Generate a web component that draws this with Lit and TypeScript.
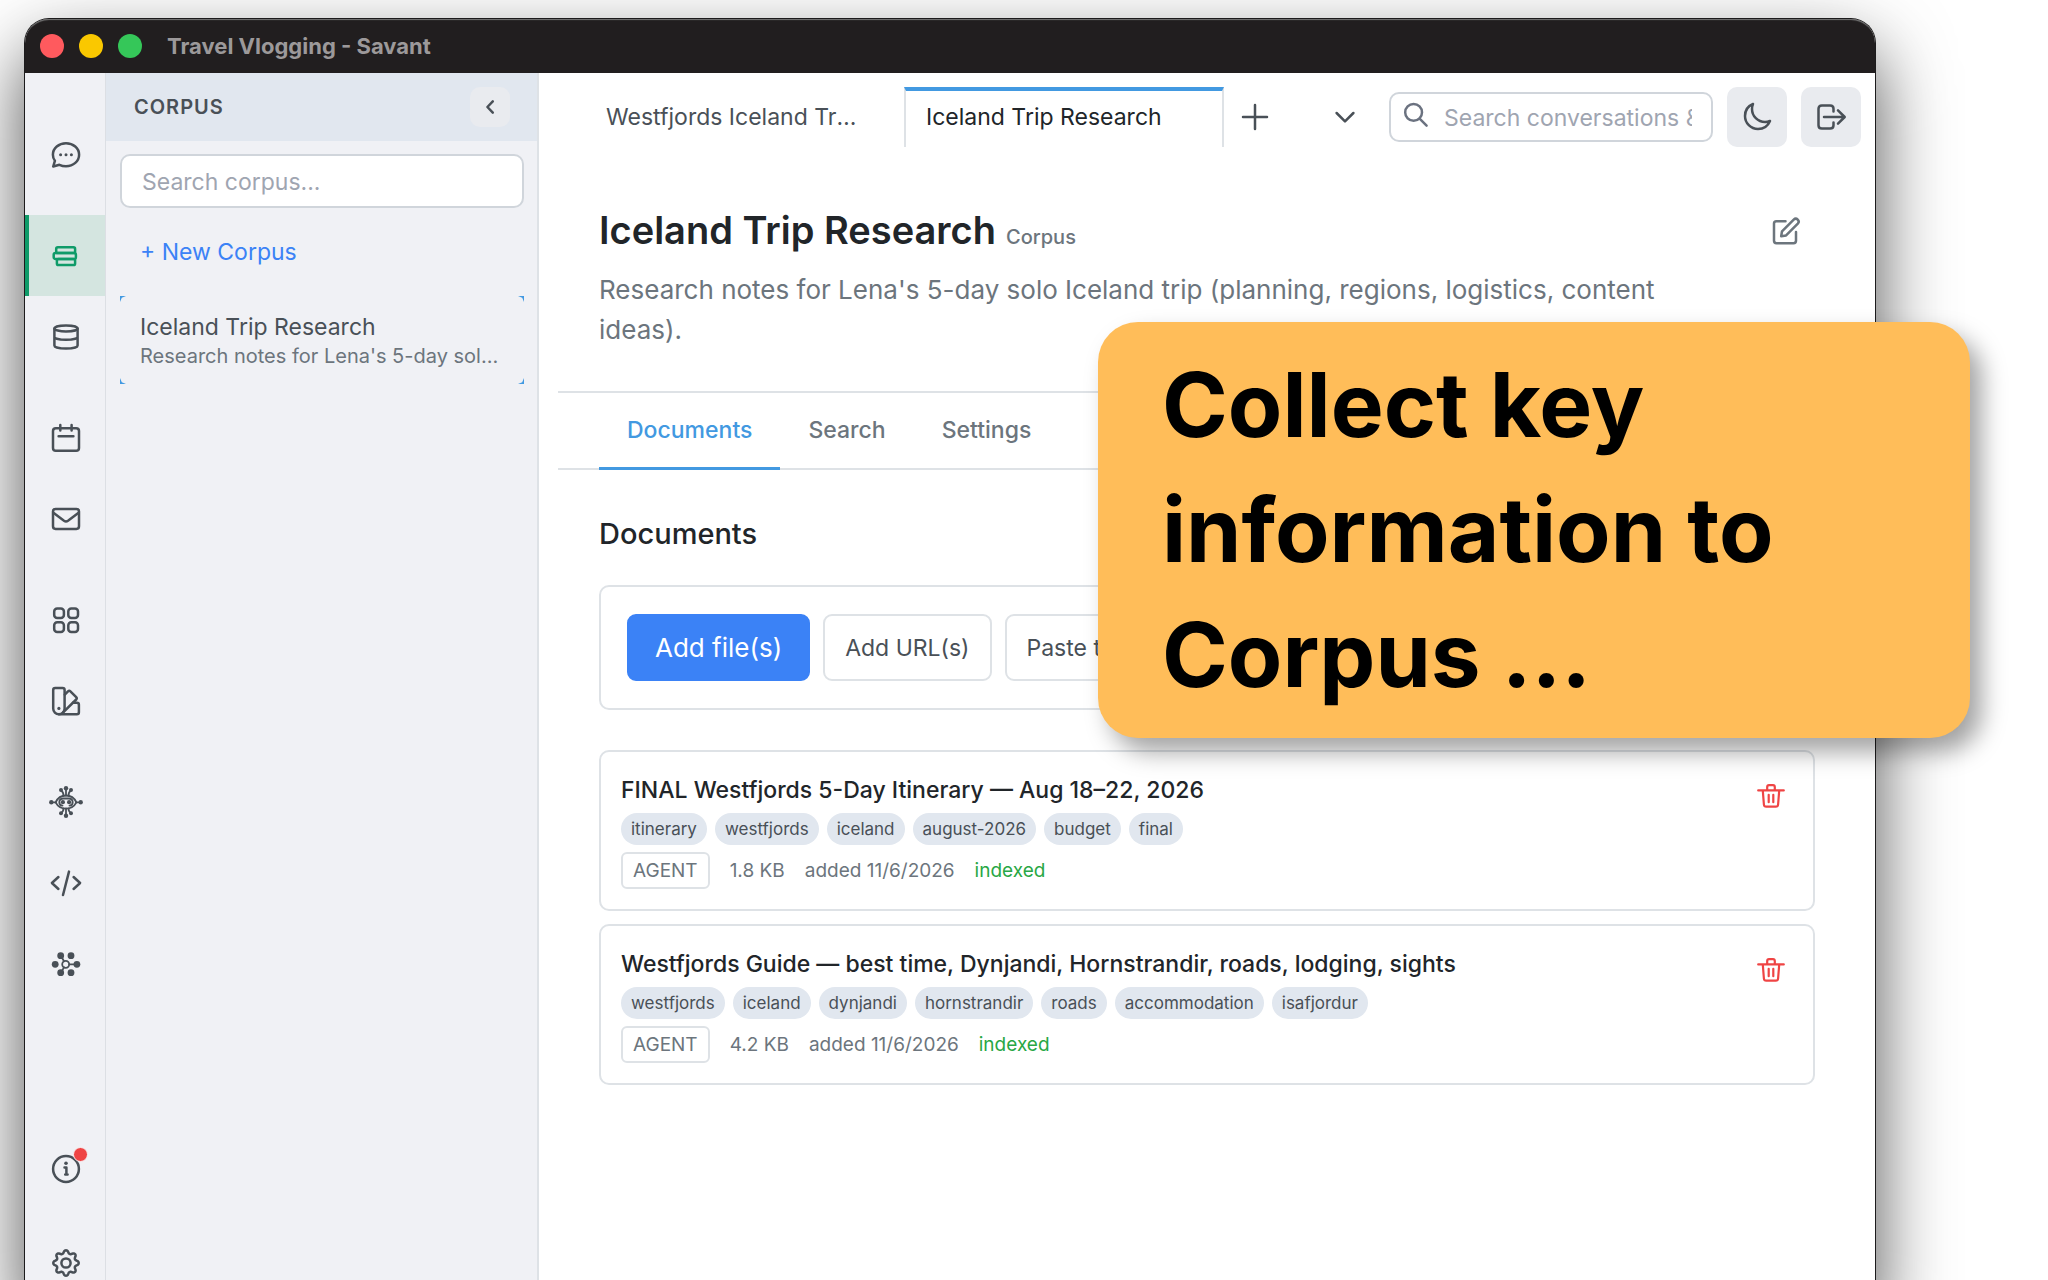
import { LitElement, html, svg, css, type SVGTemplateResult } from "lit";
import { customElement, property } from "lit/decorators.js";

/* Outline of an eight-toothed cog, traced as a wavy circle around (16, 16). */
const cogOutline = (): string => {
  const points: string[] = [];
  for (let step = 0; step < 128; step++) {
    const angle = (step / 128) * Math.PI * 2;
    const wave = Math.cos(angle * 8);
    const radius = 11.2 + 1.5 * Math.sign(wave) * Math.pow(Math.abs(wave), 0.7);
    points.push(
      `${(16 + radius * Math.sin(angle)).toFixed(2)} ${(16 - radius * Math.cos(angle)).toFixed(2)}`,
    );
  }
  return `M${points.join("L")}Z`;
};

const icons: Record<string, SVGTemplateResult> = {
  chat: svg`
    <path d="M4.900 21.800C3.500 20 2.900 17.900 2.900 15.700 2.900 9.200 8.800 4.300 16 4.300S29.100 9.200 29.100 15.700 23.300 27.200 16 27.200c-2.400 0-4.600-.5-6.600-1.400L3.200 27.500Z" />
    <g class="solid"><circle cx="10.600" cy="15.800" r="1.500" /><circle cx="16" cy="15.800" r="1.500" /><circle cx="21.400" cy="15.800" r="1.500" /></g>`,
  corpus: svg`
    <rect x="6.200" y="7.300" width="18.900" height="5.700" rx="1.600" />
    <rect x="3.700" y="13" width="22.200" height="6" rx="1.800" />
    <rect x="6.900" y="19" width="18.200" height="6" rx="1.600" />`,
  database: svg`
    <ellipse cx="16" cy="7.400" rx="11.600" ry="3" />
    <path d="M4.400 7.400v17c0 1.700 5.200 3.100 11.600 3.100s11.600-1.400 11.600-3.100v-17M4.400 15.700c0 1.700 5.200 3.100 11.600 3.100s11.600-1.400 11.600-3.100" />`,
  calendar: svg`
    <rect x="3" y="6.300" width="26" height="22.500" rx="2.800" />
    <path d="M10.300 2.900v5.600M21.600 2.900v5.600M8.600 14.200h14.800" />`,
  mail: svg`
    <rect x="3" y="5.900" width="26" height="20" rx="2.600" />
    <path d="M3.400 9.800 14 17.800q2 1.400 4 0L28.600 9.800" />`,
  grid: svg`
    <rect x="4.200" y="4.400" width="9.700" height="9.700" rx="3" />
    <rect x="18.300" y="4.400" width="9.700" height="9.700" rx="3" />
    <rect x="4.200" y="18.200" width="9.700" height="9.700" rx="3" />
    <rect x="18.300" y="18.200" width="9.700" height="9.700" rx="3" />`,
  swatch: svg`
    <path d="M3.200 5q0-2 2-2h7.400q2 0 2 2v18.500a5.700 5.700 0 0 1-11.400 0Z" />
    <path d="M14.800 9.600 18 6.300q1.200-1.200 2.400 0l5.800 5.800q1.200 1.200 0 2.400L12.900 27.700" />
    <path d="M23 17.800h3.900q2 0 2 2v7.400q0 2-2 2H9" />
    <circle class="solid" cx="8.900" cy="23.400" r="1.600" />`,
  agent: svg`
    <g class="solid">
      <circle cx="16" cy="2.200" r="2.200" /><circle cx="11" cy="4" r="2" /><circle cx="21" cy="4" r="2" />
      <circle cx="1.300" cy="16.300" r="2.200" /><circle cx="30.700" cy="16.300" r="2.200" />
      <circle cx="16" cy="29.800" r="2.200" /><circle cx="11" cy="27.200" r="2" /><circle cx="21" cy="27.200" r="2" />
      <circle cx="12.900" cy="16.200" r="2.100" /><circle cx="19.100" cy="16.200" r="2.100" />
    </g>
    <path class="fine" d="M16 2.500v7M11 4.500q2.500 1.500 2.500 5M21 4.500q-2.500 1.500-2.500 5M1.500 16.300h4.500M30.500 16.300H26M16 29.500v-7M11 27q2.500-1.500 2.500-4.500M21 27q-2.500-1.500-2.500-4.500" />
    <path class="fine" d="M5.600 16.300C8 11.300 11.500 9.500 16 9.500s8 1.800 10.400 6.800C24 20.800 20.500 22.600 16 22.600S8 20.800 5.600 16.300Z" />
    <path class="fine" d="M12.500 19.600q-3.200 0-3.200-3.300 0-3.800 4-3.800h5.400q4 0 4 3.800 0 3.300-3.200 3.300" />`,
  code: svg`<path d="M8.400 10 1.900 16l6.500 6M23.600 10l6.500 6-6.500 6M19 4.600 13 28" />`,
  hub: svg`
    <g class="solid">
      <circle cx="5.200" cy="16.300" r="3.400" /><circle cx="10.700" cy="7.700" r="3.400" /><circle cx="21" cy="7.700" r="3.400" />
      <circle cx="26.900" cy="16.300" r="3.400" /><circle cx="10.700" cy="24.700" r="3.400" /><circle cx="21" cy="24.700" r="3.400" />
    </g>
    <circle class="fine" cx="15.700" cy="16.300" r="3.500" />
    <path class="fine" d="M19.200 16.300H26M14 13.200 11 8M14 19.400 11 24.500" />`,
  info: svg`
    <circle cx="16" cy="16" r="12.900" />
    <circle class="solid" cx="16" cy="10.300" r="1.800" />
    <path d="M14.500 14.600h1.900v7M15.200 21.600h2.400" />`,
  settings: svg`<circle cx="16" cy="16" r="4.600" /><path d=${cogOutline()} />`,
  back: svg`<path d="m18.800 10.400-5.400 5.600 5.400 5.600" />`,
  plus: svg`<path d="M16 4v24M4 16h24" />`,
  down: svg`<path d="m7.600 12 8.400 8.400 8.400-8.400" />`,
  search: svg`<circle cx="13.600" cy="12.400" r="8.400" /><path d="m19.600 18.600 7 7" />`,
  moon: svg`<path d="M29 20a13 13 0 0 1-5 1c-7.200 0-13-5.800-13-13 0-1.800.350-3.500 1-5A13 13 0 0 0 4 15c0 7.200 5.800 13 13 13a13 13 0 0 0 12-8Z" />`,
  leave: svg`<path d="M18.500 10.500V7.800q0-3.300-3.300-3.300H6.800q-3.300 0-3.300 3.300v16.400q0 3.300 3.300 3.300h8.400q3.300 0 3.300-3.300v-2.700M9 16h20.500M23 9.300l6.700 6.700-6.700 6.700" />`,
  edit: svg`<path d="M15.500 6.200H6.400q-2.400 0-2.400 2.400v17.200q0 2.400 2.400 2.400h17.200q2.400 0 2.400-2.400v-8.900" /><path d="m11.200 21.200.8-4.900L23.700 4.600a2.900 2.900 0 0 1 4.100 4.100L16.100 20.400Z" />`,
  trash: svg`<path d="M3.200 10.400h25.600M12.200 10.200V7q0-1.800 1.800-1.800h4q1.800 0 1.800 1.800v3.200M7.800 10.600l1.100 13.900q.2 2.200 2.400 2.200h9.400q2.200 0 2.400-2.200l1.100-13.900M13.700 14.800v7.400M18.300 14.800v7.400" />`,
};

@customElement("app-icon")
export class AppIcon extends LitElement {
  @property() name = "";

  static styles = css`
    :host {
      display: block;
      flex: none;
      width: 32px;
      height: 32px;
    }
    svg {
      display: block;
      width: 100%;
      height: 100%;
      overflow: visible;
      fill: none;
      stroke: currentColor;
      stroke-width: var(--icon-stroke, 2.5);
      stroke-linecap: round;
      stroke-linejoin: round;
    }
    .solid {
      fill: currentColor;
      stroke: none;
    }
    .fine {
      stroke-width: 1.8;
    }
  `;

  render() {
    return html`<svg viewBox="0 0 32 32" aria-hidden="true">${icons[this.name]}</svg>`;
  }
}

interface CorpusDocument {
  title: string;
  tags: string[];
  size: string;
  added: string;
}

const documents: CorpusDocument[] = [
  {
    title: "FINAL Westfjords 5-Day Itinerary — Aug 18–22, 2026",
    tags: ["itinerary", "westfjords", "iceland", "august-2026", "budget", "final"],
    size: "1.8 KB",
    added: "added 11/6/2026",
  },
  {
    title: "Westfjords Guide — best time, Dynjandi, Hornstrandir, roads, lodging, sights",
    tags: ["westfjords", "iceland", "dynjandi", "hornstrandir", "roads", "accommodation", "isafjordur"],
    size: "4.2 KB",
    added: "added 11/6/2026",
  },
];

const railGroups: { icon: string; label: string; active?: boolean }[][] = [
  [{ icon: "chat", label: "Chat" }],
  [
    { icon: "corpus", label: "Corpus", active: true },
    { icon: "database", label: "Database" },
  ],
  [
    { icon: "calendar", label: "Calendar" },
    { icon: "mail", label: "Mail" },
  ],
  [
    { icon: "grid", label: "Apps" },
    { icon: "swatch", label: "Themes" },
  ],
  [
    { icon: "agent", label: "Agents" },
    { icon: "code", label: "Code" },
    { icon: "hub", label: "Connections" },
  ],
];

@customElement("app-root")
export class AppRoot extends LitElement {
  static styles = css`
    :host {
      display: block;
      font-family: Inter, "Liberation Sans", sans-serif;
      font-size: 23px;
      color: #495057;
    }
    * {
      box-sizing: border-box;
    }
    button,
    input {
      font: inherit;
      color: inherit;
      margin: 0;
    }
    button {
      border: 0;
      padding: 0;
      background: none;
      cursor: pointer;
    }
    h1,
    h2,
    h3,
    p,
    ul {
      margin: 0;
      padding: 0;
    }
    a {
      color: inherit;
      text-decoration: none;
    }

    .stage {
      position: relative;
      height: 100vh;
      overflow: hidden;
      background: #fff;
      padding: 19px 173px 0 25px;
    }
    .window {
      display: flex;
      flex-direction: column;
      height: calc(100vh + 4px);
      border-radius: 24px 24px 0 0;
      background: #fff;
      box-shadow:
        0 0 0 1px #1c1b1c,
        0 32px 76px rgba(0, 0, 0, 0.7);
    }
    .titlebar {
      flex: none;
      display: flex;
      align-items: center;
      gap: 15px;
      height: 54px;
      padding: 0 15px;
      border-radius: 24px 24px 0 0;
      background: #211e1f;
      box-shadow: inset 0 2px 1px -1px #777;
      color: #9c999a;
    }
    .light {
      width: 24px;
      height: 24px;
      border-radius: 50%;
    }
    .red {
      background: #ff5a5e;
    }
    .yellow {
      background: #fac800;
    }
    .green {
      background: #35c759;
    }
    .window-title {
      margin-left: 10px;
      font-size: 22px;
      font-weight: 700;
    }
    .body {
      flex: 1;
      display: flex;
      min-height: 0;
    }

    .rail {
      flex: none;
      display: flex;
      flex-direction: column;
      gap: 20px;
      width: 81px;
      padding-top: 41px;
      background: #f0f1f5;
      border-right: 1px solid #dcdfe4;
    }
    .rail-group {
      display: flex;
      flex-direction: column;
    }
    .rail-bottom {
      margin-top: auto;
      gap: 13px;
    }
    .rail-item {
      display: grid;
      place-items: center;
      height: 81px;
      padding-left: 2px;
    }
    .rail-item.active {
      padding: 0 2px 0 0;
      border-left: 4px solid #0f9b69;
      background: #d4e5e0;
      color: #0f9b69;
    }
    .badged {
      position: relative;
    }
    .badge {
      position: absolute;
      top: -6px;
      right: -6px;
      width: 15px;
      height: 15px;
      border: 1px solid #f8f0f2;
      border-radius: 50%;
      background: #ef4444;
    }

    .sidebar {
      flex: none;
      width: 433px;
      background: #f0f1f5;
      border-right: 2px solid #dee2e6;
    }
    .sidebar-head {
      display: flex;
      align-items: center;
      justify-content: space-between;
      height: 68px;
      padding: 0 27px 0 28px;
      background: #e1e7ef;
    }
    .sidebar-title {
      font-size: 20px;
      font-weight: 600;
      letter-spacing: 1px;
    }
    .collapse {
      display: grid;
      place-items: center;
      width: 40px;
      height: 40px;
      border-radius: 10px;
      background: #e9ebef;
    }
    .sidebar-body {
      display: flex;
      flex-direction: column;
      padding: 13px 13px 0 14px;
    }
    input {
      min-width: 0;
      border: 2px solid #d0d5db;
      border-radius: 10px;
      background: #fff;
      outline: none;
    }
    input::placeholder {
      color: #9fa5b1;
      opacity: 1;
    }
    .corpus-search {
      height: 54px;
      padding: 2px 20px 0;
    }
    .new-corpus {
      align-self: flex-start;
      margin: 20px 0;
      padding: 0 20px;
      line-height: 48px;
      color: #3b82f6;
    }
    .corpus-item {
      position: relative;
      display: block;
      padding: 16px 20px 14px;
      overflow: hidden;
    }
    .corpus-name {
      line-height: 30px;
    }
    .corpus-note {
      font-size: 20px;
      line-height: 28px;
      color: #6c757d;
      white-space: nowrap;
      overflow: hidden;
      text-overflow: ellipsis;
    }
    .corner {
      position: absolute;
      width: 6px;
      height: 6px;
      background: #4299e1;
    }
    .tl {
      top: 0;
      left: 0;
      clip-path: polygon(0 0, 100% 0, 30% 30%, 0 100%);
    }
    .tr {
      top: 0;
      right: 0;
      clip-path: polygon(0 0, 100% 0, 100% 100%, 70% 30%);
    }
    .bl {
      bottom: 0;
      left: 0;
      clip-path: polygon(0 0, 30% 70%, 100% 100%, 0 100%);
    }
    .br {
      bottom: 0;
      right: 0;
      clip-path: polygon(100% 0, 100% 100%, 0 100%, 70% 70%);
    }

    .main {
      flex: 1;
      min-width: 0;
    }
    .topbar {
      display: flex;
      align-items: center;
      gap: 14px;
      padding: 14px 14px 0 45px;
    }
    .tabs {
      display: flex;
      flex: 1;
      min-width: 0;
      align-items: center;
    }
    .tab {
      width: 320px;
      height: 60px;
      padding: 0 20px;
      border: solid transparent;
      border-width: 4px 2px;
      line-height: 52px;
      text-align: left;
      overflow: hidden;
      white-space: nowrap;
    }
    .tab-label {
      display: block;
      max-width: 256px;
      overflow: hidden;
      text-overflow: ellipsis;
    }
    .tab.current {
      border-color: #4299e1 #dee2e6 transparent;
      border-width: 4px 2px 0;
      padding-bottom: 4px;
      color: #212529;
    }
    .add-tab {
      margin-left: 15px;
    }
    .more-tabs {
      margin: 0 14px;
    }
    .find {
      position: relative;
      flex: none;
      width: 324px;
    }
    .find app-icon {
      position: absolute;
      top: 8px;
      left: 11px;
      color: #6b7280;
    }
    .find input {
      display: block;
      width: 100%;
      height: 50px;
      padding: 2px 19px 0 53px;
    }
    .square {
      flex: none;
      display: grid;
      place-items: center;
      width: 60px;
      height: 60px;
      border-radius: 10px;
      background: #e9ebef;
    }

    .page {
      padding: 0 18px 0 19px;
    }
    .intro {
      display: flex;
      align-items: flex-start;
      justify-content: space-between;
      padding: 56px 55px 41px 41px;
      border-bottom: 2px solid #dee2e6;
    }
    .heading {
      display: flex;
      align-items: baseline;
      gap: 10px;
      line-height: 54px;
    }
    h1 {
      font-size: 38px;
      font-weight: 600;
      color: #212529;
    }
    .kind {
      font-size: 20px;
      font-weight: 500;
      line-height: 24px;
      color: #6c757d;
    }
    .lead {
      margin-top: 13px;
      max-width: 1080px;
      font-size: 26px;
      line-height: 40px;
      color: #6c757d;
    }
    .edit {
      margin-top: 12px;
      color: #6c757d;
    }
    .sections {
      display: flex;
      padding: 0 41px;
      border-bottom: 2px solid #dee2e6;
    }
    .section {
      height: 77px;
      margin-bottom: -2px;
      padding: 0 28px;
      border-bottom: 3px solid transparent;
      font-weight: 500;
      color: #6c757d;
    }
    .section.current {
      border-color: #4299e1;
      color: #4299e1;
    }
    .content {
      padding: 43px 42px 43px 41px;
    }
    h2 {
      font-size: 29px;
      font-weight: 500;
      line-height: 42px;
      color: #212529;
    }
    .actions {
      display: flex;
      gap: 13px;
      margin: 30px 0 40px;
      padding: 27px 26px;
      border: 2px solid #dee2e6;
      border-radius: 10px;
    }
    .action {
      height: 67px;
      padding: 0 20px;
      border: 2px solid #dee2e6;
      border-radius: 9px;
      background: #fff;
      white-space: nowrap;
    }
    .primary {
      padding: 0 26px;
      border-color: #3b82f6;
      background: #3b82f6;
      color: #fff;
      font-size: 26px;
    }
    .cards {
      display: flex;
      flex-direction: column;
      gap: 13px;
      list-style: none;
    }
    .card {
      display: flex;
      justify-content: space-between;
      align-items: flex-start;
      padding: 20px 26px 20px 20px;
      border: 2px solid #dee2e6;
      border-radius: 10px;
    }
    h3 {
      font-size: 23px;
      font-weight: 500;
      line-height: 36px;
      color: #212529;
    }
    .tags {
      display: flex;
      gap: 8px;
      margin-top: 5px;
    }
    .tag {
      padding: 0 10px;
      border-radius: 16px;
      background: #e1e7ef;
      font-size: 17px;
      line-height: 32px;
    }
    .meta {
      display: flex;
      align-items: center;
      gap: 20px;
      margin-top: 7px;
      font-size: 19px;
      color: #6c757d;
    }
    .source {
      padding: 0 10px;
      border: 2px solid #dee2e6;
      border-radius: 6px;
      line-height: 33px;
    }
    .state {
      color: #28a745;
    }
    .delete {
      --icon-stroke: 2.200;
      margin-top: 8px;
      color: #ef4444;
    }

    .callout {
      position: absolute;
      top: 322px;
      right: 78px;
      width: 872px;
      padding: 20px 64px 21px;
      border-radius: 40px;
      background: #ffbd59;
      box-shadow: 12px 14px 24px rgba(0, 0, 0, 0.36);
      font-size: 89px;
      font-weight: 700;
      line-height: 125px;
      color: #000;
    }
    .line {
      display: block;
    }
  `;

  private rail() {
    return html`
      <nav class="rail" aria-label="Workspace">
        ${railGroups.map(
          (group) => html`
            <div class="rail-group">
              ${group.map(
                (item) => html`
                  <button class="rail-item ${item.active ? "active" : ""}" aria-label=${item.label}>
                    <app-icon name=${item.icon}></app-icon>
                  </button>
                `,
              )}
            </div>
          `,
        )}
        <div class="rail-group rail-bottom">
          <button class="rail-item" aria-label="About">
            <span class="badged"><app-icon name="info"></app-icon><span class="badge"></span></span>
          </button>
          <button class="rail-item" aria-label="Settings"><app-icon name="settings"></app-icon></button>
        </div>
      </nav>
    `;
  }

  private sidebar() {
    return html`
      <aside class="sidebar">
        <div class="sidebar-head">
          <span class="sidebar-title">CORPUS</span>
          <button class="collapse" aria-label="Collapse"><app-icon name="back"></app-icon></button>
        </div>
        <div class="sidebar-body">
          <input class="corpus-search" type="text" placeholder="Search corpus..." aria-label="Search corpus" />
          <button class="new-corpus">+ New Corpus</button>
          <a class="corpus-item" href="#iceland">
            <div class="corpus-name">Iceland Trip Research</div>
            <div class="corpus-note">Research notes for Lena's 5-day solo Iceland trip</div>
            <span class="corner tl"></span><span class="corner tr"></span>
            <span class="corner bl"></span><span class="corner br"></span>
          </a>
        </div>
      </aside>
    `;
  }

  private topbar() {
    return html`
      <div class="topbar">
        <div class="tabs">
          <button class="tab"><span class="tab-label">Westfjords Iceland Travel</span></button>
          <button class="tab current"><span class="tab-label">Iceland Trip Research</span></button>
          <button class="add-tab" aria-label="New tab"><app-icon name="plus"></app-icon></button>
        </div>
        <button class="more-tabs" aria-label="All tabs"><app-icon name="down"></app-icon></button>
        <div class="find">
          <app-icon name="search"></app-icon>
          <input type="text" placeholder="Search conversations &amp; files" aria-label="Search conversations" />
        </div>
        <button class="square" aria-label="Dark mode"><app-icon name="moon"></app-icon></button>
        <button class="square" aria-label="Sign out"><app-icon name="leave"></app-icon></button>
      </div>
    `;
  }

  private card(doc: CorpusDocument) {
    return html`
      <li class="card">
        <div>
          <h3>${doc.title}</h3>
          <div class="tags">${doc.tags.map((tag) => html`<span class="tag">${tag}</span>`)}</div>
          <div class="meta">
            <span class="source">AGENT</span>
            <span>${doc.size}</span>
            <span>${doc.added}</span>
            <span class="state">indexed</span>
          </div>
        </div>
        <button class="delete" aria-label="Delete"><app-icon name="trash"></app-icon></button>
      </li>
    `;
  }

  render() {
    return html`
      <div class="stage">
        <div class="window">
          <header class="titlebar">
            <span class="light red"></span><span class="light yellow"></span><span class="light green"></span>
            <span class="window-title">Travel Vlogging - Savant</span>
          </header>
          <div class="body">
            ${this.rail()} ${this.sidebar()}
            <main class="main">
              ${this.topbar()}
              <div class="page">
                <div class="intro">
                  <div>
                    <div class="heading">
                      <h1>Iceland Trip Research</h1>
                      <span class="kind">Corpus</span>
                    </div>
                    <p class="lead">
                      Research notes for Lena's 5-day solo Iceland trip (planning, regions, logistics, content ideas).
                    </p>
                  </div>
                  <button class="edit" aria-label="Edit corpus"><app-icon name="edit"></app-icon></button>
                </div>
                <div class="sections">
                  <button class="section current">Documents</button>
                  <button class="section">Search</button>
                  <button class="section">Settings</button>
                </div>
                <div class="content">
                  <h2>Documents</h2>
                  <div class="actions">
                    <button class="action primary">Add file(s)</button>
                    <button class="action">Add URL(s)</button>
                    <button class="action">Paste text</button>
                  </div>
                  <ul class="cards">
                    ${documents.map((doc) => this.card(doc))}
                  </ul>
                </div>
              </div>
            </main>
          </div>
        </div>
        <div class="callout">
          <span class="line">Collect key</span>
          <span class="line">information to</span>
          <span class="line">Corpus ...</span>
        </div>
      </div>
    `;
  }
}
